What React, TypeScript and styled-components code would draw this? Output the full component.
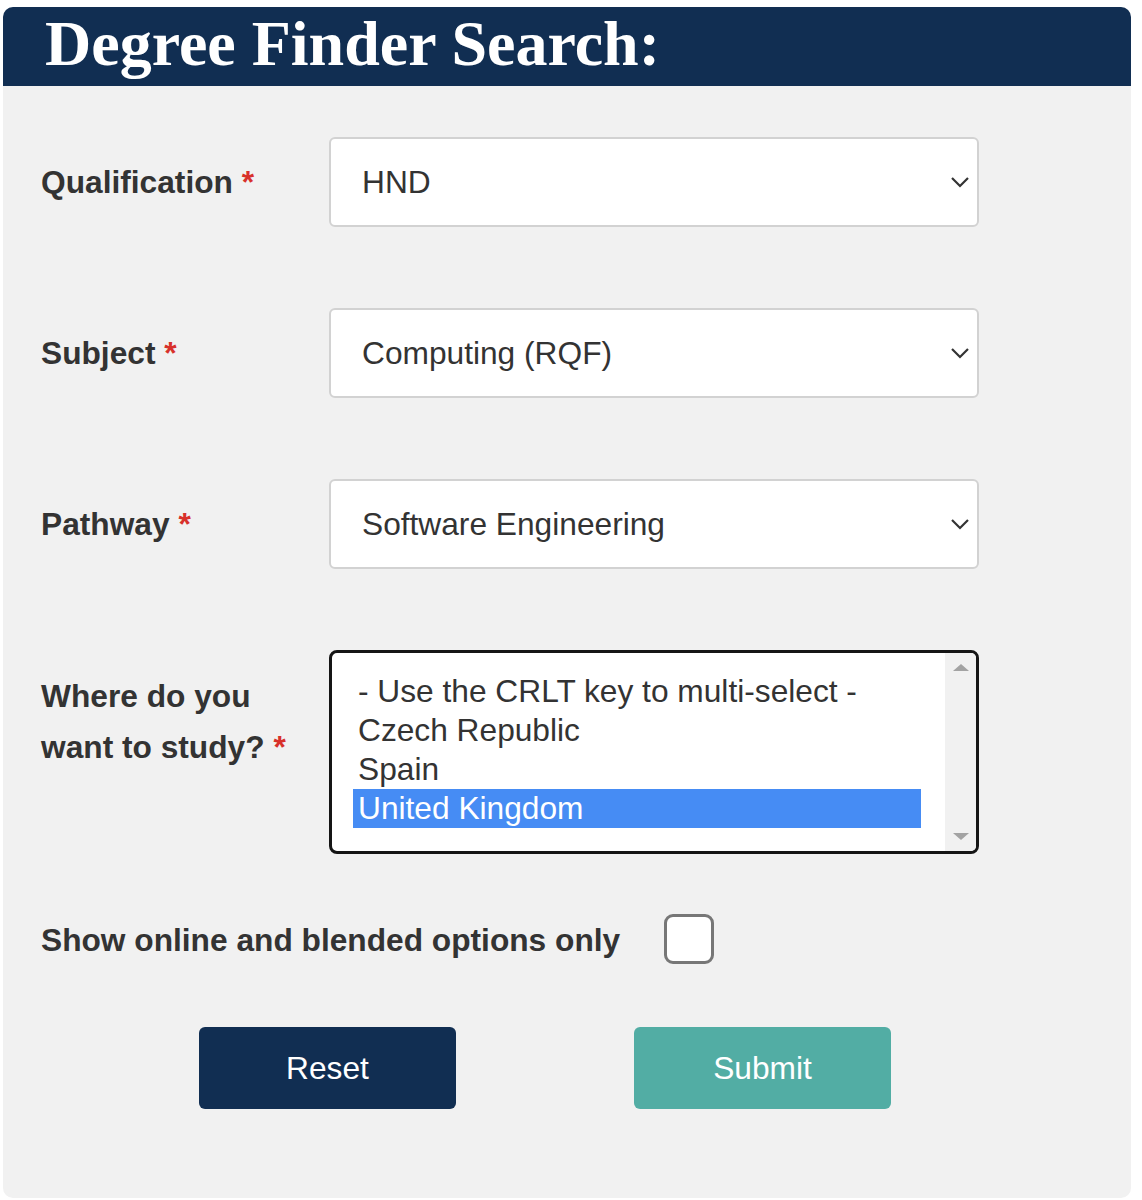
import React from "react";
import styled, { createGlobalStyle } from "styled-components";

const Global = createGlobalStyle`
  html, body { margin: 0; padding: 0; background: #ffffff; }
  body { font-family: "Liberation Sans", Arial, sans-serif; }
`;

const Page = styled.div`
  padding: 7px 11px 2px 3px;
`;

const Card = styled.div`
  width: 1128px;
  height: 1191px;
  background: #f1f1f1;
  border-radius: 10px;
  overflow: hidden;
  display: flex;
  flex-direction: column;
`;

const Header = styled.div`
  height: 79px;
  background: #112e52;
  display: flex;
  align-items: center;
  padding-left: 42px;
`;

const Title = styled.h1`
  margin: 0;
  font-family: "Liberation Serif", "Times New Roman", serif;
  font-weight: 700;
  font-size: 64px;
  line-height: 1;
  color: #ffffff;
  letter-spacing: 0;
  transform: translateY(-3px);
`;

const Form = styled.div`
  display: flex;
  flex-direction: column;
  padding: 51px 0 0 38px;
`;

const Row = styled.div<{ $top?: boolean }>`
  display: flex;
  align-items: ${(p) => (p.$top ? "flex-start" : "center")};
  margin-bottom: 81px;
`;

const Label = styled.label<{ $pad?: number }>`
  width: 288px;
  flex: none;
  font-size: 31.7px;
  font-weight: 700;
  line-height: 51px;
  color: #333333;
  padding-top: ${(p) => p.$pad ?? 0}px;
`;

const Req = styled.span`
  color: #d8312b;
`;

const SelectBox = styled.div`
  width: 650px;
  height: 90px;
  box-sizing: border-box;
  background: #ffffff;
  border: 2px solid #d2d2d2;
  border-radius: 6px;
  display: flex;
  align-items: center;
  justify-content: space-between;
  padding: 0 6px 0 31px;
  font-size: 31.7px;
  color: #333333;
`;

const ListBox = styled.div`
  width: 650px;
  height: 204px;
  box-sizing: border-box;
  background: #ffffff;
  border: 3px solid #151515;
  border-radius: 8px;
  display: flex;
  overflow: hidden;
`;

const Options = styled.div`
  flex: 1;
  padding: 19px 24px 0 21px;
  display: flex;
  flex-direction: column;
`;

const Option = styled.div<{ $selected?: boolean }>`
  height: 39px;
  line-height: 38px;
  padding-left: 5px;
  font-size: 31.7px;
  white-space: nowrap;
  color: ${(p) => (p.$selected ? "#ffffff" : "#333333")};
  background: ${(p) => (p.$selected ? "#468cf4" : "transparent")};
`;

const Scrollbar = styled.div`
  width: 31px;
  background: #f1f1f1;
  display: flex;
  flex-direction: column;
  justify-content: space-between;
  align-items: center;
  padding: 11px 0 11px;
`;

const Arrow = styled.div<{ $down?: boolean }>`
  width: 0;
  height: 0;
  border-left: 8px solid transparent;
  border-right: 8px solid transparent;
  ${(p) =>
    p.$down
      ? "border-top: 7px solid #a3a3a3;"
      : "border-bottom: 7px solid #a3a3a3;"}
`;

const CheckRow = styled.div`
  display: flex;
  align-items: center;
  gap: 44px;
  margin-top: -21px;
`;

const CheckLabel = styled.span`
  font-size: 31.7px;
  font-weight: 700;
  color: #333333;
  padding-top: 3px;
`;

const CheckBox = styled.div`
  width: 50px;
  height: 50px;
  box-sizing: border-box;
  border: 3px solid #777777;
  border-radius: 9px;
  background: #ffffff;
`;

const Buttons = styled.div`
  display: flex;
  gap: 178px;
  padding-left: 158px;
  margin-top: 63px;
`;

const Button = styled.button<{ $color: string }>`
  width: 257px;
  height: 82px;
  border: none;
  border-radius: 6px;
  background: ${(p) => p.$color};
  color: #ffffff;
  font-family: "Liberation Sans", Arial, sans-serif;
  font-size: 31.7px;
  cursor: pointer;
`;

const Chevron = () => (
  <svg width="22" height="14" viewBox="0 0 22 14">
    <path d="M3 3 L11 11 L19 3" fill="none" stroke="#333" strokeWidth="2.2" />
  </svg>
);

const Select = ({ value }: { value: string }) => (
  <SelectBox>
    <span>{value}</span>
    <Chevron />
  </SelectBox>
);

export default function App() {
  return (
    <>
      <Global />
      <Page>
        <Card>
          <Header>
            <Title>Degree Finder Search:</Title>
          </Header>
          <Form>
            <Row>
              <Label>
                Qualification <Req>*</Req>
              </Label>
              <Select value="HND" />
            </Row>
            <Row>
              <Label>
                Subject <Req>*</Req>
              </Label>
              <Select value="Computing (RQF)" />
            </Row>
            <Row>
              <Label>
                Pathway <Req>*</Req>
              </Label>
              <Select value="Software Engineering" />
            </Row>
            <Row $top>
              <Label $pad={21}>
                Where do you
                <br />
                want to study? <Req>*</Req>
              </Label>
              <ListBox>
                <Options>
                  <Option>- Use the CRLT key to multi-select -</Option>
                  <Option>Czech Republic</Option>
                  <Option>Spain</Option>
                  <Option $selected>United Kingdom</Option>
                </Options>
                <Scrollbar>
                  <Arrow />
                  <Arrow $down />
                </Scrollbar>
              </ListBox>
            </Row>
            <CheckRow>
              <CheckLabel>Show online and blended options only</CheckLabel>
              <CheckBox />
            </CheckRow>
            <Buttons>
              <Button $color="#112e52">Reset</Button>
              <Button $color="#52ada4">Submit</Button>
            </Buttons>
          </Form>
        </Card>
      </Page>
    </>
  );
}
